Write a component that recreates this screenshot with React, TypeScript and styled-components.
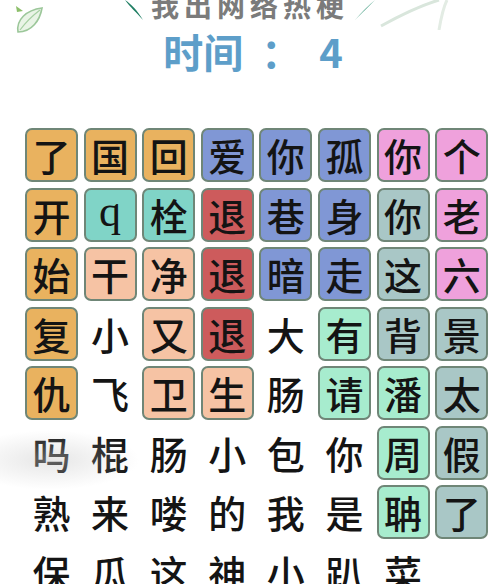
import styled, { createGlobalStyle } from 'styled-components'

type Tone = 'orange' | 'blue' | 'red' | 'pink' | 'teal' | 'peach' | 'grey' | 'mint' | 'none'

const toneColors: Record<Tone, string> = {
  orange: '#e9b25f',
  blue: '#8097d5',
  red: '#cd5b5c',
  pink: '#efa1dc',
  teal: '#80d4c7',
  peach: '#f6c3a4',
  grey: '#a9c7c6',
  mint: '#a7ecce',
  none: 'transparent',
}

const o: Tone = 'orange'
const b: Tone = 'blue'
const r: Tone = 'red'
const p: Tone = 'pink'
const t: Tone = 'teal'
const e: Tone = 'peach'
const g: Tone = 'grey'
const m: Tone = 'mint'
const n: Tone = 'none'

const rows: [string, Tone][][] = [
  [['了', o], ['国', o], ['回', o], ['爱', b], ['你', b], ['孤', b], ['你', p], ['个', p]],
  [['开', o], ['q', t], ['栓', t], ['退', r], ['巷', b], ['身', b], ['你', g], ['老', p]],
  [['始', o], ['干', e], ['净', e], ['退', r], ['暗', b], ['走', b], ['这', g], ['六', p]],
  [['复', o], ['小', n], ['又', e], ['退', r], ['大', n], ['有', m], ['背', g], ['景', g]],
  [['仇', o], ['飞', n], ['卫', e], ['生', e], ['肠', n], ['请', m], ['潘', m], ['太', g]],
  [['吗', n], ['棍', n], ['肠', n], ['小', n], ['包', n], ['你', n], ['周', m], ['假', g]],
  [['熟', n], ['来', n], ['喽', n], ['的', n], ['我', n], ['是', n], ['聃', m], ['了', g]],
  [['保', n], ['瓜', n], ['这', n], ['神', n], ['小', n], ['趴', n], ['菜', n]],
]

const App = () => {
  return (
    <Page>
      <GlobalStyle />
      <CornerLeaf width='34' height='40' viewBox='0 0 34 40'>
        <path d='M4 30 C2 18 12 8 28 6 C26 18 18 30 4 30 Z' fill='#e9f4e6' stroke='#9cc79a' strokeWidth='1.6' />
        <path d='M6 28 C12 20 18 14 26 8' stroke='#a6cfa2' strokeWidth='1.2' fill='none' />
        <path d='M2 4 L9 9 L3 10 Z' fill='#8cbf6a' />
      </CornerLeaf>
      <Mist />
      <Header>
        <TitleRow>
          <Stroke width='26' height='26' viewBox='0 0 26 26'>
            <path d='M2 2 C8 6 14 12 20 22 C13 14 7 9 2 2 Z' fill='#1f7e63' />
          </Stroke>
          <Title>我出网络热梗</Title>
          <Stroke width='26' height='26' viewBox='0 0 26 26'>
            <path d='M24 2 C18 8 12 14 4 22 C12 13 18 7 24 2 Z' fill='#1f8a6a' />
          </Stroke>
          <FaintStrokes width='90' height='34' viewBox='0 0 90 34'>
            <path d='M2 30 C20 20 40 10 60 4' stroke='#d9e6dc' strokeWidth='3' fill='none' />
            <path d='M60 34 C62 22 64 12 68 4' stroke='#e3ece4' strokeWidth='3' fill='none' />
          </FaintStrokes>
        </TitleRow>
        <Timer>
          <span>时间</span>
          <Colon>：</Colon>
          <span>4</span>
        </Timer>
      </Header>
      <Board>
        {rows.map((row, ri) =>
          row.map(([ch, tone], ci) => (
            <Cell key={`${ri}-${ci}`} $tone={tone} $latin={ch === 'q'}>
              {ch}
            </Cell>
          )),
        )}
      </Board>
    </Page>
  )
}
export default App

const GlobalStyle = createGlobalStyle`
  html, body {
    margin: 0;
    padding: 0;
    background: #ffffff;
  }
  body {
    font-family: "Noto Sans CJK SC", "Noto Sans", sans-serif;
  }
`
const Page = styled.div`
  position: relative;
  width: 500px;
  height: 584px;
  overflow: hidden;
  background: #fff;
`
const CornerLeaf = styled.svg`
  position: absolute;
  left: 14px;
  top: 2px;
`
const Mist = styled.div`
  position: absolute;
  left: -40px;
  top: 430px;
  width: 180px;
  height: 60px;
  border-radius: 50%;
  background: radial-gradient(ellipse at center, rgba(200, 200, 200, 0.45), rgba(255, 255, 255, 0) 70%);
`
const Header = styled.div`
  height: 128px;
  display: flex;
  flex-direction: column;
  align-items: center;
`
const TitleRow = styled.div`
  position: relative;
  display: flex;
  align-items: flex-start;
  gap: 2px;
  margin-top: -10px;
  height: 30px;
`
const Stroke = styled.svg`
  margin-top: 8px;
`
const FaintStrokes = styled.svg`
  position: absolute;
  right: -92px;
  top: 6px;
`
const Title = styled.div`
  font-size: 28px;
  font-weight: 700;
  color: #7b7b7b;
  letter-spacing: 5px;
  line-height: 30px;
`
const Timer = styled.div`
  display: flex;
  align-items: center;
  margin-top: 8px;
  font-size: 40px;
  font-weight: 700;
  color: #5d9ec9;
  line-height: 46px;
  padding-left: 6px;
`
const Colon = styled.span`
  width: 40px;
  margin-left: 18px;
  margin-right: 18px;
`
const Board = styled.div`
  display: grid;
  grid-template-columns: repeat(8, 53px);
  grid-auto-rows: 54px;
  column-gap: 5.6px;
  row-gap: 5.5px;
  padding-left: 25px;
`
const Cell = styled.div<{ $tone: Tone; $latin: boolean }>`
  box-sizing: border-box;
  display: flex;
  align-items: center;
  justify-content: center;
  border-radius: 7px;
  background: ${(props) => toneColors[props.$tone]};
  border: 2px solid ${(props) => (props.$tone === 'none' ? 'transparent' : '#6f8677')};
  color: #141414;
  font-size: ${(props) => (props.$latin ? '44px' : '38px')};
  font-family: ${(props) => (props.$latin ? '"Liberation Serif", serif' : '"Noto Sans CJK SC", sans-serif')};
  font-weight: 500;
  line-height: 1;
  padding-bottom: ${(props) => (props.$latin ? '6px' : '0')};
`
